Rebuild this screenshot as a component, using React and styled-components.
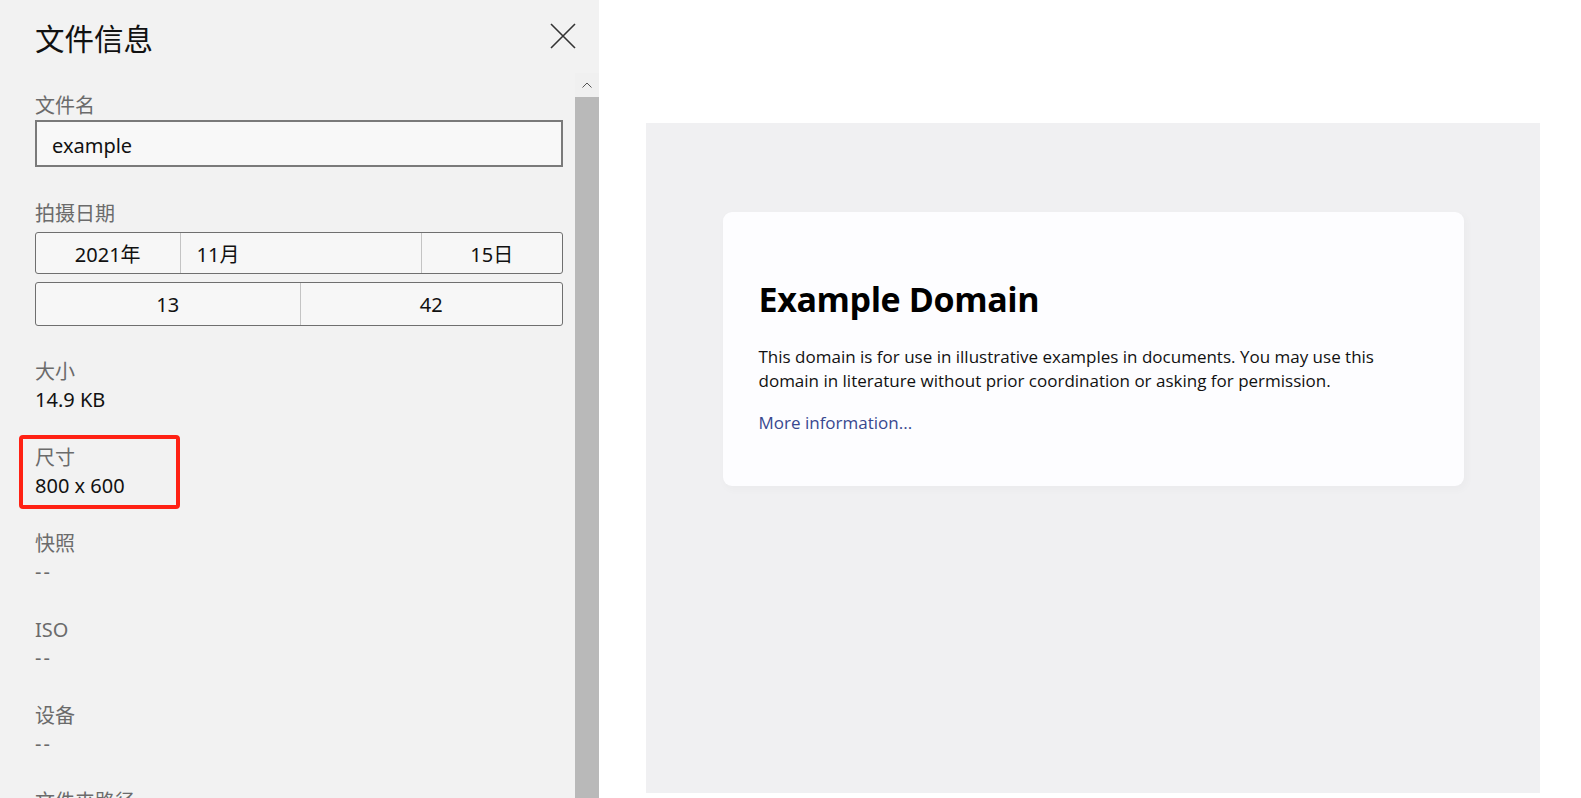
import React from "react";
import styled, { createGlobalStyle } from "styled-components";

const Global = createGlobalStyle`
  html, body {
    margin: 0;
    padding: 0;
    height: 100%;
    overflow: hidden;
  }
  #root {
    height: 100%;
  }
`;

const Page = styled.div`
  display: flex;
  height: 100vh;
  background: #ffffff;
`;

/* left panel */

const Panel = styled.aside`
  width: 599px;
  flex-shrink: 0;
  display: flex;
  flex-direction: column;
  background: #f2f2f2;
  font-family: "Noto Sans", "Noto Sans CJK SC", sans-serif;
  color: #1a1a1a;
`;

const PanelHead = styled.div`
  height: 73px;
  display: flex;
  align-items: center;
  justify-content: space-between;
  padding: 0 23px 0 35px;
  box-sizing: border-box;
`;

const PanelTitle = styled.h2`
  margin: 0;
  font-size: 29.5px;
  font-weight: 400;
  line-height: 40px;
  color: #111;
  font-family: "Noto Sans CJK SC", sans-serif;
`;

const CloseBtn = styled.button`
  width: 26px;
  height: 26px;
  padding: 0;
  border: none;
  background: none;
  display: flex;
  align-items: center;
  justify-content: center;
  margin-top: -1px;
`;

const Scroller = styled.div`
  flex: 1;
  display: flex;
  min-height: 0;
  overflow: hidden;
`;

const Fields = styled.div`
  flex: 1;
  padding: 19px 12px 0 35px;
`;

const Scrollbar = styled.div`
  width: 24px;
  display: flex;
  flex-direction: column;
`;

const ScrollArrow = styled.div`
  height: 24px;
  display: flex;
  align-items: center;
  justify-content: center;
  background: #f0f0f0;
`;

const ScrollThumb = styled.div`
  flex: 1;
  background: #b9b9b9;
`;

const Label = styled.div`
  font-size: 20px;
  line-height: 28px;
  color: #6b6b6b;
  font-family: "Noto Sans", "Noto Sans CJK SC", sans-serif;
`;

const Value = styled.div`
  font-size: 20px;
  line-height: 28px;
  color: ${(p) => (p.$muted ? "#6b6b6b" : "#111")};
  letter-spacing: ${(p) => (p.$muted ? "2px" : "0")};
`;

const NameBox = styled.div`
  height: 47px;
  box-sizing: border-box;
  border: 2px solid #7a7a7a;
  background: #f8f8f8;
  display: flex;
  align-items: center;
  padding: 3px 0 0 15px;
  font-size: 20px;
  color: #111;
`;

const Section = styled.div`
  margin-top: ${(p) => p.$top || 0}px;
`;

const DateRow = styled.div`
  display: grid;
  grid-template-columns: ${(p) => p.$cols};
  height: ${(p) => p.$h}px;
  box-sizing: border-box;
  border: 1.5px solid #6f6f6f;
  border-radius: 3px;
  background: #f7f7f7;
  margin-top: ${(p) => p.$top || 0}px;
`;

const DateCell = styled.div`
  display: flex;
  align-items: center;
  justify-content: ${(p) => (p.$left ? "flex-start" : "center")};
  padding-left: ${(p) => (p.$left ? "16px" : "0")};
  font-size: 20px;
  color: #111;
  border-left: ${(p) => (p.$first ? "none" : "1.5px solid #c4c4c4")};
`;

const Prop = styled.div`
  position: relative;
  margin-top: ${(p) => p.$top}px;

  ${(p) =>
    p.$marked &&
    `
    &::after {
      content: "";
      position: absolute;
      top: -9px;
      left: -16px;
      width: 161px;
      height: 74px;
      box-sizing: border-box;
      border: 4px solid #ff2114;
      border-radius: 4px;
    }
  `}
`;

/* right side */

const Preview = styled.main`
  flex: 1;
  display: flex;
  padding: 123px 41px 5px 47px;
  box-sizing: border-box;
`;

const Frame = styled.div`
  flex: 1;
  background: #f0f0f2;
  font-family: "Open Sans", "Noto Sans", sans-serif;
  overflow: hidden;
`;

const Card = styled.div`
  width: 669px;
  margin: 89px auto 0;
  padding: 36px 36px 33px;
  background: #fdfdff;
  border-radius: 9px;
  box-shadow: 2px 3px 7px 2px rgba(0, 0, 0, 0.02);
`;

const CardTitle = styled.h1`
  margin: 27px 0 22px;
  font-size: 34px;
  line-height: 48px;
  font-weight: 700;
  color: #000;
  letter-spacing: -0.4px;
`;

const CardText = styled.p`
  margin: 18px 0;
  font-size: 17px;
  line-height: 24px;
  color: #111;
`;

const CardLink = styled.a`
  color: #38488f;
  text-decoration: none;
`;

const CloseIcon = () => (
  <svg width="26" height="26" viewBox="0 0 26 26">
    <path d="M1 1 L25 25 M25 1 L1 25" stroke="#333" strokeWidth="1.6" fill="none" />
  </svg>
);

const UpIcon = () => (
  <svg width="10" height="6" viewBox="0 0 10 6">
    <path d="M0.5 5.5 L5 1 L9.5 5.5" stroke="#555" strokeWidth="1" fill="none" />
  </svg>
);

const props = [
  { label: "大小", value: "14.9 KB", top: 32 },
  { label: "尺寸", value: "800 x 600", top: 30, marked: true },
  { label: "快照", value: "--", top: 30, muted: true },
  { label: "ISO", value: "--", top: 30, muted: true },
  { label: "设备", value: "--", top: 30, muted: true },
  { label: "文件夹路径", value: "", top: 30 },
];

export default function App() {
  return (
    <Page>
      <Global />
      <Panel>
        <PanelHead>
          <PanelTitle>文件信息</PanelTitle>
          <CloseBtn aria-label="关闭">
            <CloseIcon />
          </CloseBtn>
        </PanelHead>
        <Scroller>
          <Fields>
            <Label>文件名</Label>
            <NameBox>example</NameBox>

            <Section $top={33}>
              <Label>拍摄日期</Label>
              <DateRow $cols="143.5px 241px 1fr" $h={42} $top={4}>
                <DateCell $first>2021年</DateCell>
                <DateCell $left>11月</DateCell>
                <DateCell>15日</DateCell>
              </DateRow>
              <DateRow $cols="263.5px 1fr" $h={44} $top={8}>
                <DateCell $first>13</DateCell>
                <DateCell>42</DateCell>
              </DateRow>
            </Section>

            {props.map((p) => (
              <Prop key={p.label} $top={p.top} $marked={p.marked}>
                <Label>{p.label}</Label>
                {p.value && <Value $muted={p.muted}>{p.value}</Value>}
              </Prop>
            ))}
          </Fields>
          <Scrollbar>
            <ScrollArrow>
              <UpIcon />
            </ScrollArrow>
            <ScrollThumb />
          </Scrollbar>
        </Scroller>
      </Panel>

      <Preview>
        <Frame>
          <Card>
            <CardTitle>Example Domain</CardTitle>
            <CardText>
              This domain is for use in illustrative examples in documents. You may use this
              domain in literature without prior coordination or asking for permission.
            </CardText>
            <CardText>
              <CardLink href="#">More information...</CardLink>
            </CardText>
          </Card>
        </Frame>
      </Preview>
    </Page>
  );
}
